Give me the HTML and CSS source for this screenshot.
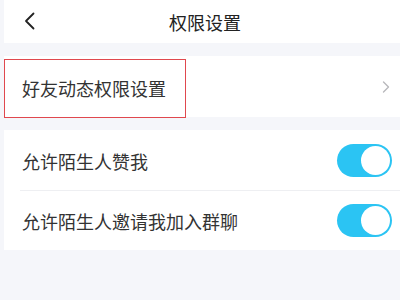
FILE: index.html
```html
<!DOCTYPE html>
<html lang="zh">
<head>
<meta charset="utf-8">
<link rel="stylesheet" href="styles.css">
</head>
<body>
<div class="page">
  <header class="nav">
    <svg class="back" width="14" height="18" viewBox="0 0 14 18"><path d="M11.5 1.5 L4 9 L11.5 16.5" fill="none" stroke="#222" stroke-width="1.8" stroke-linecap="round" stroke-linejoin="round"/></svg>
    <div class="title">权限设置</div>
  </header>
  <section class="panel first">
    <div class="row link">
      <span class="label">好友动态权限设置</span>
      <svg class="chev" width="8" height="12" viewBox="0 0 8 12"><path d="M1.5 1 L6.5 6 L1.5 11" fill="none" stroke="#b8b8bc" stroke-width="1.4" stroke-linecap="round" stroke-linejoin="round"/></svg>
      <div class="highlight"></div>
    </div>
  </section>
  <section class="panel second">
    <div class="row">
      <span class="label">允许陌生人赞我</span>
      <span class="toggle"><span class="knob"></span></span>
    </div>
    <div class="row divided">
      <span class="label">允许陌生人邀请我加入群聊</span>
      <span class="toggle"><span class="knob"></span></span>
    </div>
  </section>
</div>
</body>
</html>
```
FILE: styles.css
```css
html, body {
  margin: 0;
  padding: 0;
  background: #f5f6fa;
  font-family: "Noto Sans CJK SC", "Noto Sans", sans-serif;
  color: #333;
}
.page {
  width: 400px;
  height: 300px;
  padding-left: 4px;
  box-sizing: border-box;
  overflow: hidden;
}
.nav {
  height: 43px;
  background: #fff;
  position: relative;
  display: flex;
  align-items: center;
  justify-content: center;
}
.back {
  position: absolute;
  left: 18px;
  top: 12px;
}
.title {
  font-size: 18px;
  color: #222;
  line-height: 1;
  margin-left: 6px;
}
.panel {
  background: #fff;
}
.first {
  margin-top: 13px;
}
.second {
  margin-top: 13px;
}
.row {
  display: flex;
  align-items: center;
  justify-content: space-between;
  padding: 0 8px 0 18px;
  position: relative;
}
.link {
  height: 61px;
  padding-right: 10px;
}
.second .row {
  height: 60px;
}
.divided::before {
  content: "";
  position: absolute;
  left: 16px;
  right: 0;
  top: 0;
  height: 1px;
  background: #eeeff2;
}
.label {
  font-size: 18px;
  line-height: 1;
  color: #333;
  margin-top: 2px;
}
.highlight {
  position: absolute;
  left: 0;
  top: 3px;
  width: 182px;
  height: 59px;
  border: 1px solid #e0484e;
  box-sizing: border-box;
}
.toggle {
  width: 55px;
  height: 33px;
  border-radius: 17px;
  background: #2bc4f3;
  position: relative;
}
.knob {
  position: absolute;
  right: 2px;
  top: 2px;
  width: 29px;
  height: 29px;
  border-radius: 50%;
  background: #fff;
}
```
